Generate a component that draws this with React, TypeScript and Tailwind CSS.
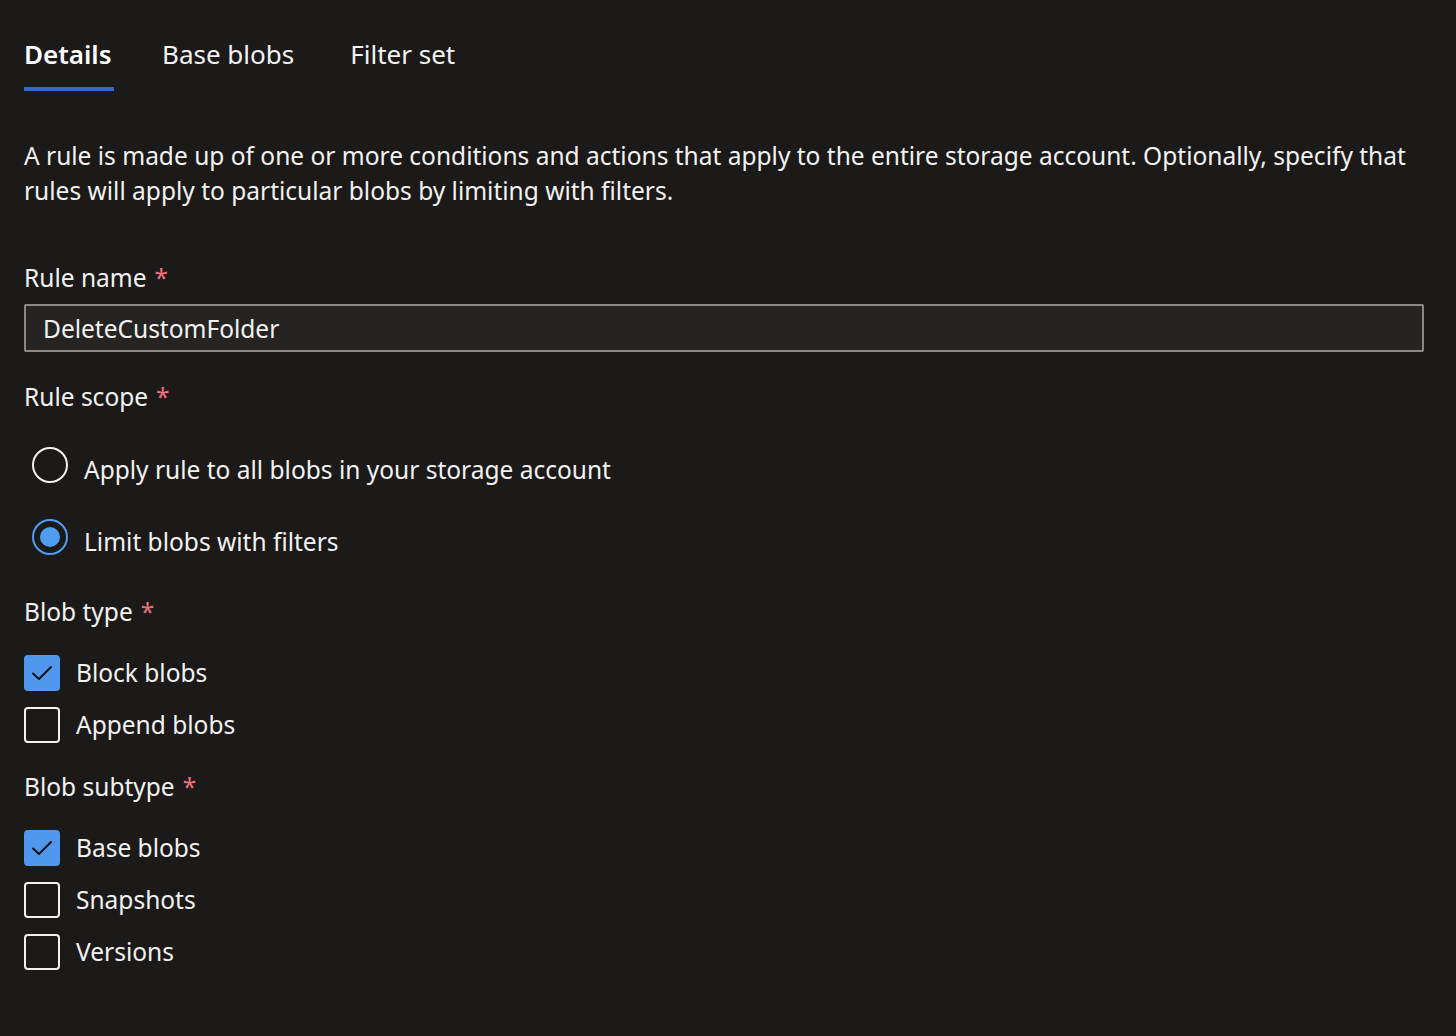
import { useState } from "react";

const font = { fontFamily: '"Noto Sans", "Open Sans", sans-serif' };

function Required({ children }: { children: string }) {
  return (
    <div className="h-[35px] flex items-center text-[24.5px] text-[#f3f2f1]">
      {children}
      <span className="ml-[8px] text-[#f1707b]">*</span>
    </div>
  );
}

function Radio({ checked, label }: { checked: boolean; label: string }) {
  return (
    <div className="flex items-center h-[40px]">
      <div
        className={
          checked
            ? "w-[36px] h-[36px] rounded-full border-2 border-[#4f9cf0] flex items-center justify-center ml-[8px]"
            : "w-[36px] h-[36px] rounded-full border-2 border-[#f3f2f1] ml-[8px]"
        }
      >
        {checked && <div className="w-[20px] h-[20px] rounded-full bg-[#4f9cf0]" />}
      </div>
      <span className="ml-[16px] mt-[10px] text-[24.5px] text-[#f3f2f1]">{label}</span>
    </div>
  );
}

function Checkbox({ checked, label }: { checked: boolean; label: string }) {
  return (
    <div className="flex items-center h-[36px]">
      <div
        className={
          checked
            ? "w-[36px] h-[36px] rounded-[4px] bg-[#4f98ee] flex items-center justify-center"
            : "w-[36px] h-[36px] rounded-[4px] border-2 border-[#f3f2f1]"
        }
      >
        {checked && (
          <svg width="22" height="16" viewBox="0 0 22 16" fill="none">
            <path d="M2 8.5 L8 14 L20 2" stroke="#111" strokeWidth="2" strokeLinecap="round" strokeLinejoin="round" />
          </svg>
        )}
      </div>
      <span className="ml-[16px] text-[24.5px] text-[#f3f2f1]">{label}</span>
    </div>
  );
}

export default function App() {
  const [tab] = useState("Details");

  return (
    <div className="min-h-[1036px] w-[1456px] bg-[#1b1a19] text-[#f3f2f1] pl-[24px] pr-[32px]" style={font}>
      <div className="flex pt-[34px]">
        <div className="flex flex-col w-[90px]">
          <span className="text-[26px] font-semibold h-[40px] leading-[40px] text-white">Details</span>
          <div className={tab === "Details" ? "mt-[13px] h-[4px] bg-[#2f6bc4]" : "mt-[13px] h-[4px]"} />
        </div>
        <div className="flex flex-col ml-[48px]">
          <span className="text-[26px] h-[40px] leading-[40px] text-[#f3f2f1]">Base blobs</span>
        </div>
        <div className="flex flex-col ml-[56px]">
          <span className="text-[26px] h-[40px] leading-[40px] text-[#f3f2f1]">Filter set</span>
        </div>
      </div>

      <p className="mt-[47px] text-[24.5px] leading-[35px] text-[#f3f2f1]">
        A rule is made up of one or more conditions and actions that apply to the entire storage account. Optionally, specify that
        rules will apply to particular blobs by limiting with filters.
      </p>

      <div className="mt-[53px]">
        <Required>Rule name</Required>
      </div>
      <div className="mt-[8px] h-[48px] rounded-[2px] border-2 border-[#8a8886] bg-[#252423] flex items-center pl-[17px] pt-[3px] text-[24.5px]">
        DeleteCustomFolder
      </div>

      <div className="mt-[28px]">
        <Required>Rule scope</Required>
      </div>
      <div className="mt-[30px] flex flex-col gap-[32px]">
        <Radio checked={false} label="Apply rule to all blobs in your storage account" />
        <Radio checked={true} label="Limit blobs with filters" />
      </div>

      <div className="mt-[38px]">
        <Required>Blob type</Required>
      </div>
      <div className="mt-[25px] flex flex-col gap-[16px]">
        <Checkbox checked={true} label="Block blobs" />
        <Checkbox checked={false} label="Append blobs" />
      </div>

      <div className="mt-[27px]">
        <Required>Blob subtype</Required>
      </div>
      <div className="mt-[25px] flex flex-col gap-[16px]">
        <Checkbox checked={true} label="Base blobs" />
        <Checkbox checked={false} label="Snapshots" />
        <Checkbox checked={false} label="Versions" />
      </div>
    </div>
  );
}
